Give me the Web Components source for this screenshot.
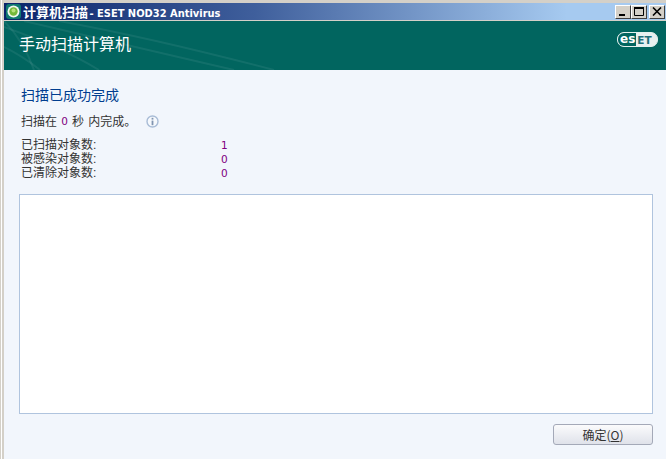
<!DOCTYPE html>
<html lang="zh">
<head>
<meta charset="utf-8">
<style>
  html, body { margin: 0; height: 100%; overflow: hidden; }
  body { width: 666px; height: 459px; font-family: "Noto Sans CJK SC", "Liberation Sans", sans-serif; }
</style>
</head>
<body>
<scan-window>
  <title-bar label="计算机扫描" product=" - ESET NOD32 Antivirus"></title-bar>
  <brand-header label="手动扫描计算机"></brand-header>
  <scan-result></scan-result>
</scan-window>
<script>
class ScanWindow extends HTMLElement {
  connectedCallback() {
    this.attachShadow({ mode: "open" });
    this.shadowRoot.innerHTML = `
      <style>
        :host {
          display: flex;
          flex-direction: column;
          width: 666px;
          height: 459px;
          box-sizing: border-box;
          padding: 3px 0 0 4px;
          background: linear-gradient(90deg, #d4d0c8 1px, #fff 1px, #fff 2px, #d4d0c8 2px);
        }
      </style>
      <slot></slot>
    `;
  }
}

class TitleBar extends HTMLElement {
  connectedCallback() {
    this.attachShadow({ mode: "open" });
    this.shadowRoot.innerHTML = `
      <style>
        :host {
          display: flex;
          align-items: center;
          flex: none;
          height: 17px;
          padding: 0 1px 0 2px;
          background: linear-gradient(90deg, #0a246a 0%, #3f5f9c 38%, #a6caf0 85%, #a6caf0 100%);
          color: #fff;
          font: bold 11px "DejaVu Sans Condensed", "DejaVu Sans", sans-serif;
          font-stretch: condensed;
        }
        svg { flex: none; display: block; margin-right: 2px; }
        .text { flex: 1; white-space: pre; }
        .text b { font: bold 13px "Noto Sans CJK SC", sans-serif; margin-right: -2px; }
        .btn {
          flex: none;
          width: 16px;
          height: 14px;
          box-sizing: border-box;
          background: #d4d0c8;
          border: 1px solid;
          border-color: #fff #404040 #404040 #fff;
          display: flex;
          align-items: center;
          justify-content: center;
        }
        .btn.close { margin-left: 2px; }
      </style>
      <svg width="15" height="15" viewBox="0 0 15 15">
        <rect width="15" height="15" rx="3" fill="#0f7a70"/>
        <circle cx="7.5" cy="7.5" r="6" fill="#f2f8f0"/>
        <circle cx="7.5" cy="7.5" r="4.2" fill="#74b83a"/>
        <circle cx="7.5" cy="6.5" r="2" fill="#b6e07a"/>
      </svg>
      <div class="text"><b>${this.getAttribute("label")}</b>${this.getAttribute("product")}</div>
      <div class="btn"><svg width="10" height="9" viewBox="0 0 10 9" style="margin:0"><rect x="1" y="7" width="6" height="2" fill="#000"/></svg></div>
      <div class="btn"><svg width="10" height="9" viewBox="0 0 10 9" style="margin:0"><path d="M0.5 1.5H9.5V8.5H0.5Z" fill="none" stroke="#000"/><rect width="10" height="2" fill="#000"/></svg></div>
      <div class="btn close"><svg width="10" height="9" viewBox="0 0 10 9" style="margin:0"><path d="M1 0.5L9 8.5M9 0.5L1 8.5" fill="none" stroke="#000" stroke-width="1.6"/></svg></div>
    `;
  }
}

class BrandHeader extends HTMLElement {
  connectedCallback() {
    this.attachShadow({ mode: "open" });
    this.shadowRoot.innerHTML = `
      <style>
        :host {
          position: relative;
          display: flex;
          justify-content: space-between;
          flex: none;
          height: 49px;
          margin-top: 1px;
          box-sizing: border-box;
          padding: 10px 8px 0 15px;
          background: #01655f;
          color: #fff;
          font: 16px/24px "Noto Sans CJK SC", sans-serif;
          overflow: hidden;
        }
        .rays { position: absolute; left: 0; top: 0; }
        .label, .logo { position: relative; }
        .logo {
          display: flex;
          align-items: center;
          width: 41px;
          height: 15px;
          margin-top: 1px;
          box-sizing: border-box;
          border: 1.5px solid #e4f0ee;
          border-radius: 7px;
          background: #e8f0f0;
          font: bold 12px/12px "DejaVu Sans", sans-serif;
          overflow: hidden;
        }
        .logo b { display: block; height: 100%; padding: 0 1px 0 2px; background: #01655f; color: #fff; font-weight: bold; }
        .logo span { padding-left: 1px; color: #1f6f7a; font-size: 10.5px; }
      </style>
      <svg class="rays" width="330" height="49" viewBox="0 0 330 49" fill="none" stroke="#fff" stroke-opacity="0.07" stroke-width="2">
        <path d="M0 6C40 20 70 34 95 49"/>
        <path d="M20 0C80 14 150 30 230 49"/>
        <path d="M55 0C110 10 190 28 270 49"/>
        <path d="M0 26C14 33 26 41 36 49"/>
        <path d="M0 0C14 14 24 32 30 49"/>
      </svg>
      <div class="label">${this.getAttribute("label")}</div>
      <div class="logo"><b>es</b><span>ET</span></div>
    `;
  }
}

class StatRow extends HTMLElement {
  connectedCallback() {
    this.attachShadow({ mode: "open" });
    this.shadowRoot.innerHTML = `
      <style>
        :host {
          display: grid;
          grid-template-columns: 200px auto;
          height: 14px;
          font: 12px/14px "Liberation Sans", "Noto Sans CJK SC", sans-serif;
          color: #333;
        }
        .val { color: #800080; font-family: "DejaVu Sans", sans-serif; font-size: 10.5px; }
      </style>
      <div>${this.getAttribute("label")}</div>
      <div class="val">${this.getAttribute("value")}</div>
    `;
  }
}

class ScanResult extends HTMLElement {
  connectedCallback() {
    this.attachShadow({ mode: "open" });
    this.shadowRoot.innerHTML = `
      <style>
        :host {
          display: flex;
          flex-direction: column;
          flex: 1;
          box-sizing: border-box;
          padding: 14px 13px 0 17px;
          background: #f2f6fc;
          color: #333;
          font-family: "Noto Sans CJK SC", sans-serif;
        }
        h1 {
          margin: 0;
          height: 20px;
          font-size: 14px;
          line-height: 20px;
          font-weight: 400;
          color: #003d8f;
        }
        .time {
          display: flex;
          align-items: center;
          height: 16px;
          margin: 9px 0 9px;
          font-size: 12px;
          line-height: 16px;
          white-space: pre;
          word-spacing: 1.5px;
        }
        .time i { font: 10.5px "DejaVu Sans", sans-serif; color: #800080; }
        .time svg { margin-left: 10px; }
        .log {
          flex: none;
          height: 220px;
          margin: 14px 0 0 -2px;
          box-sizing: border-box;
          background: #fff;
          border: 1px solid #b0c4de;
        }
        .foot { display: flex; justify-content: flex-end; margin-top: 10px; }
        button {
          width: 100px;
          height: 21px;
          margin: 0;
          padding: 0;
          border: 1px solid #a4a9b8;
          border-radius: 3px;
          background: linear-gradient(#fbfbfc, #dfe2ea);
          color: #333;
          font: 12px/18px "Noto Sans CJK SC", sans-serif;
        }
        u { text-underline-offset: 1px; }
      </style>
      <h1>扫描已成功完成</h1>
      <div class="time">扫描在 <i>0</i> 秒 内完成。<svg width="13" height="13" viewBox="0 0 13 13"><circle cx="6.5" cy="6.5" r="5.5" fill="#f6f9fd" stroke="#a9bcd6" stroke-width="1.4"/><rect x="5.6" y="2.8" width="1.8" height="1.8" fill="#8094b0"/><rect x="5.6" y="5.6" width="1.8" height="4.6" fill="#8094b0"/></svg></div>
      <stat-row label="已扫描对象数:" value="1"></stat-row>
      <stat-row label="被感染对象数:" value="0"></stat-row>
      <stat-row label="已清除对象数:" value="0"></stat-row>
      <div class="log"></div>
      <div class="foot"><button>确定(<u>O</u>)</button></div>
    `;
  }
}

customElements.define("scan-window", ScanWindow);
customElements.define("title-bar", TitleBar);
customElements.define("brand-header", BrandHeader);
customElements.define("stat-row", StatRow);
customElements.define("scan-result", ScanResult);
</script>
</body>
</html>
